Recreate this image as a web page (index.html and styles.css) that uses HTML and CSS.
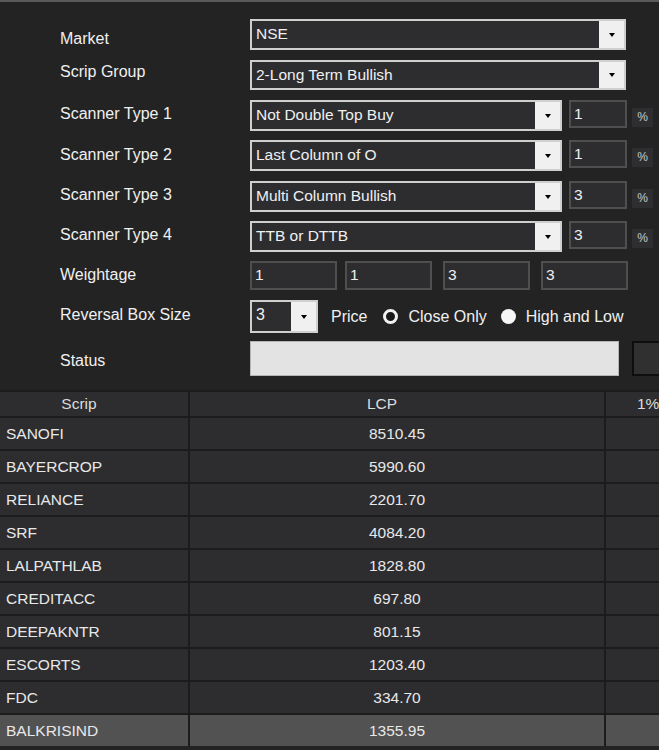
FILE: index.html
```html
<!DOCTYPE html>
<html lang="en">
<head>
<meta charset="utf-8">
<title>Scanner</title>
<link rel="stylesheet" href="styles.css">
</head>
<body>
<div class="panel">
<div class="form">
<div class="label lbl-first">Market</div>
<div class="field">
<div class="combo combo-wide"><span class="combo-text">NSE</span><span class="combo-btn"><i class="arrow"></i></span></div>
</div>

<div class="label lbl-group">Scrip Group</div>
<div class="field">
<div class="combo combo-wide combo-short"><span class="combo-text">2-Long Term Bullish</span><span class="combo-btn"><i class="arrow"></i></span></div>
</div>

<div class="label">Scanner Type 1</div>
<div class="field">
<div class="combo combo-mid"><span class="combo-text">Not Double Top Buy</span><span class="combo-btn"><i class="arrow"></i></span></div>
<div class="num num-pct">1</div>
<div class="pct">%</div>
</div>

<div class="label lbl-low">Scanner Type 2</div>
<div class="field">
<div class="combo combo-mid"><span class="combo-text">Last Column of O</span><span class="combo-btn"><i class="arrow"></i></span></div>
<div class="num num-pct">1</div>
<div class="pct">%</div>
</div>

<div class="label">Scanner Type 3</div>
<div class="field">
<div class="combo combo-mid"><span class="combo-text">Multi Column Bullish</span><span class="combo-btn"><i class="arrow"></i></span></div>
<div class="num num-pct">3</div>
<div class="pct">%</div>
</div>

<div class="label">Scanner Type 4</div>
<div class="field">
<div class="combo combo-mid"><span class="combo-text">TTB or DTTB</span><span class="combo-btn"><i class="arrow"></i></span></div>
<div class="num num-pct">3</div>
<div class="pct">%</div>
</div>

<div class="label">Weightage</div>
<div class="field weights">
<div class="num num-weight">1</div>
<div class="num num-weight">1</div>
<div class="num num-weight">3</div>
<div class="num num-weight">3</div>
</div>

<div class="label lbl-low">Reversal Box Size</div>
<div class="field reversal">
<div class="combo combo-small"><span class="combo-text">3</span><span class="combo-btn"><i class="arrow"></i></span></div>
<span class="price">Price</span>
<span class="radio radio-ring"></span>
<span class="radio-text">Close Only</span>
<span class="radio radio-dot"></span>
<span class="radio-text">High and Low</span>
</div>

<div class="label lbl-status">Status</div>
<div class="field">
<div class="status"></div>
<div class="status-btn"></div>
</div>
</div>

<div class="grid">
<div class="grid-row grid-head">
<div class="cell cell-head">Scrip</div>
<div class="cell cell-head">LCP</div>
<div class="cell cell-head cell-pct">1%</div>
</div>
<div class="grid-row"><div class="cell">SANOFI</div><div class="cell cell-num">8510.45</div><div class="cell"></div></div>
<div class="grid-row"><div class="cell">BAYERCROP</div><div class="cell cell-num">5990.60</div><div class="cell"></div></div>
<div class="grid-row"><div class="cell">RELIANCE</div><div class="cell cell-num">2201.70</div><div class="cell"></div></div>
<div class="grid-row"><div class="cell">SRF</div><div class="cell cell-num">4084.20</div><div class="cell"></div></div>
<div class="grid-row"><div class="cell">LALPATHLAB</div><div class="cell cell-num">1828.80</div><div class="cell"></div></div>
<div class="grid-row"><div class="cell">CREDITACC</div><div class="cell cell-num">697.80</div><div class="cell"></div></div>
<div class="grid-row"><div class="cell">DEEPAKNTR</div><div class="cell cell-num">801.15</div><div class="cell"></div></div>
<div class="grid-row"><div class="cell">ESCORTS</div><div class="cell cell-num">1203.40</div><div class="cell"></div></div>
<div class="grid-row"><div class="cell">FDC</div><div class="cell cell-num">334.70</div><div class="cell"></div></div>
<div class="grid-row selected"><div class="cell">BALKRISIND</div><div class="cell cell-num">1355.95</div><div class="cell"></div></div>
</div>
</div>
</body>
</html>
```

FILE: styles.css
```css
* {
margin: 0;
padding: 0;
box-sizing: border-box;
}

body {
background-color: #232323;
color: #f0f0f0;
font-family: "Liberation Sans", Arial, sans-serif;
font-size: 15.5px;
line-height: 18px;
overflow: hidden;
width: 659px;
height: 750px;
}

.panel {
border-top: 2px solid #5a5a5a;
}

.form {
display: grid;
grid-template-columns: 190px auto;
grid-template-rows: 41px 40px 40px 41px 40px 40px 39px 41px 49px;
padding-top: 17px;
padding-left: 60px;
}

.label {
padding-top: 5px;
font-size: 16px;
white-space: nowrap;
}

.lbl-first {
padding-top: 11px;
}

.lbl-group {
padding-top: 3px;
}

.lbl-low {
padding-top: 6px;
}

.lbl-status {
padding-top: 11px;
}

.field {
display: flex;
align-items: flex-start;
overflow: hidden;
}

/* combo box */
.combo {
display: flex;
flex-shrink: 0;
height: 31px;
border: 2px solid #cfcfcf;
background-color: #2d2d30;
}

.combo-wide {
width: 376px;
}

.combo-short {
height: 30px;
}

.combo-mid {
width: 312px;
}

.combo-small {
width: 68px;
height: 33px;
}

.combo-text {
flex: 1;
padding: 4px 4px 0;
white-space: nowrap;
overflow: hidden;
}

.combo-btn {
width: 25px;
background-color: #f0f0f0;
display: flex;
align-items: center;
justify-content: center;
}

.arrow {
display: block;
width: 0;
height: 0;
border-left: 3.5px solid transparent;
border-right: 3.5px solid transparent;
border-top: 4px solid #000;
}

/* number inputs */
.num {
flex-shrink: 0;
height: 29px;
border: 2px solid #4f4f4f;
background-color: #2d2d30;
padding: 3px 0 0 3px;
}

.num-pct {
width: 58px;
margin-left: 7px;
height: 28px;
}

.pct {
flex-shrink: 0;
width: 21px;
height: 19px;
margin-top: 8px;
margin-left: 5px;
background-color: #2e2e31;
color: #c8c8c8;
font-size: 12px;
line-height: 19px;
text-align: center;
}

.weights .num-weight {
width: 87px;
}

.weights .num-weight + .num-weight {
margin-left: 8px;
}

.weights .num-weight:nth-child(3),
.weights .num-weight:nth-child(4) {
margin-left: 11px;
}

/* reversal row */
.reversal {
align-items: center;
height: 33px;
font-size: 16px;
}

.price {
margin-left: 13px;
}

.radio {
flex-shrink: 0;
width: 15px;
height: 15px;
border-radius: 50%;
margin-left: 16px;
}

.radio-ring {
border: 3px solid #f2f2f2;
background-color: #1a1a1a;
}

.radio-dot {
background-color: #f7f7f7;
margin-left: 14px;
}

.radio-text {
margin-left: 10px;
white-space: nowrap;
}

/* status */
.status {
flex-shrink: 0;
width: 369px;
height: 35px;
background-color: #e3e3e3;
border: 1px solid #b5b5b5;
}

.status-btn {
flex-shrink: 0;
width: 40px;
height: 35px;
margin-left: 13px;
background-color: #303030;
border: 2px solid #0e0e0e;
}

/* data grid */
.grid {
display: grid;
row-gap: 2px;
padding-top: 2px;
background-color: #1c1c1c;
width: 100%;
}

.grid-row {
display: grid;
grid-template-columns: 188px 414px 1fr;
column-gap: 2px;
height: 31px;
}

.grid-head {
height: 24px;
}

.cell {
background-color: #2d2d30;
color: #e8e8e8;
padding-left: 6px;
display: flex;
align-items: center;
white-space: nowrap;
overflow: hidden;
}

.cell-head {
justify-content: center;
padding-left: 0;
padding-right: 30px;
color: #dcdcdc;
}

.cell-pct {
justify-content: flex-start;
padding-left: 31px;
padding-right: 0;
}

.cell-num {
justify-content: center;
padding-left: 0;
}

.selected .cell {
background-color: #525252;
}
```
